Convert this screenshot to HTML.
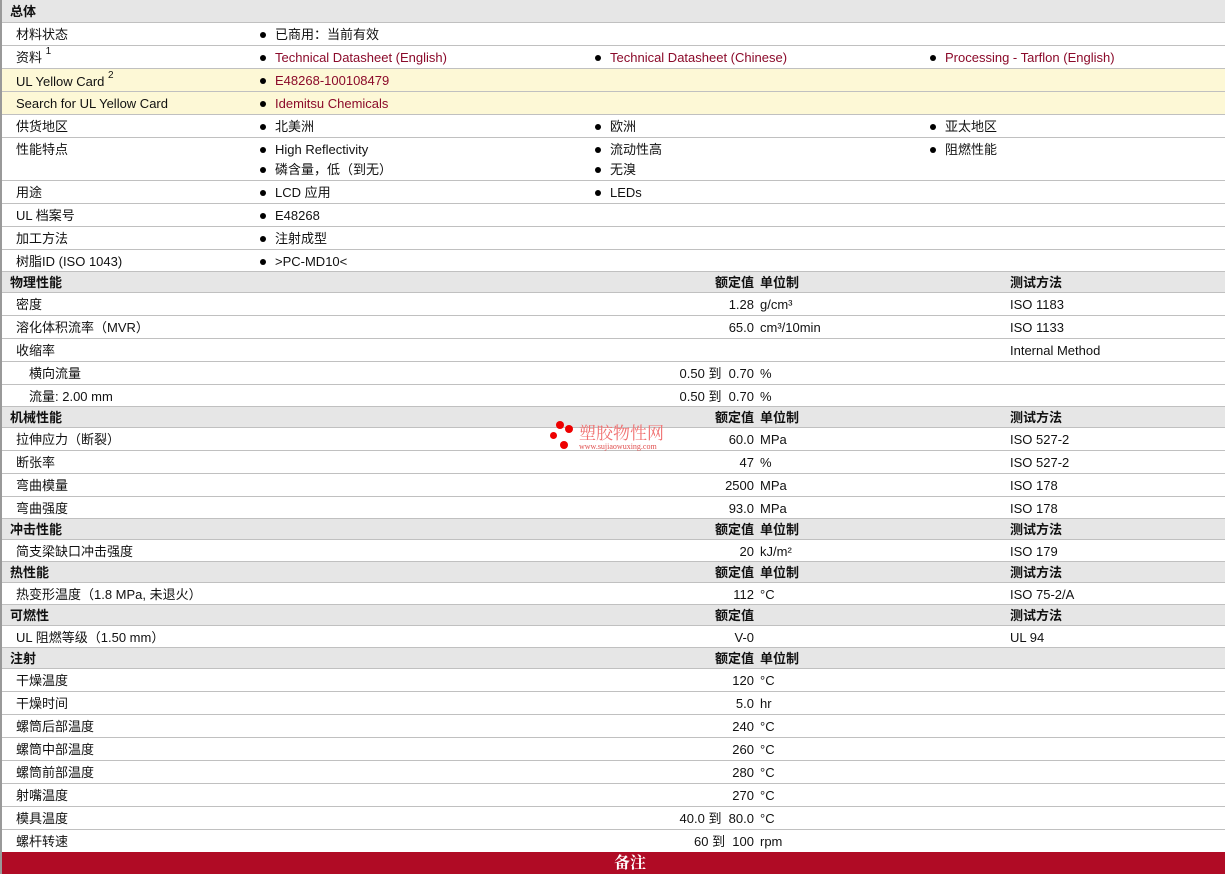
<!DOCTYPE html><html><head><meta charset="utf-8"><style>
body{margin:0;width:1225px;height:874px;overflow:hidden;background:#fff;font-family:"Liberation Sans","Noto Sans CJK SC",sans-serif;font-size:13px;color:#111;position:relative}
.r{position:absolute;left:0;width:1225px;border-bottom:1px solid #c0c0c0;box-sizing:border-box}
.h{background:#e6e6e6;font-weight:bold}
.y{background:#fdf8d6}
.r span{position:absolute;white-space:nowrap;line-height:17px;height:17px}
.b::before{content:"";position:absolute;left:-15px;top:6px;width:6px;height:6px;border-radius:50%;background:#000}
.l{color:#8b0a2a}
.v{right:471px;text-align:right}
sup{font-size:10px;line-height:10px;position:relative;top:-2px;vertical-align:top}
</style></head><body>
<div style="position:absolute;left:0;top:0;width:2px;height:874px;background:#999;z-index:5"></div>

<div class="r h" style="top:0;height:23px"><span style="left:10px;top:3px">总体</span></div>
<div class="r" style="top:23px;height:23px"><span style="left:16px;top:3px">材料状态</span><span class="b" style="left:275px;top:3px">已商用：当前有效</span></div>
<div class="r" style="top:46px;height:23px"><span style="left:16px;top:3px">资料 <sup>1</sup></span><span class="b l" style="left:275px;top:3px">Technical Datasheet (English)</span><span class="b l" style="left:610px;top:3px">Technical Datasheet (Chinese)</span><span class="b l" style="left:945px;top:3px">Processing - Tarflon (English)</span></div>
<div class="r y" style="top:69px;height:23px"><span style="left:16px;top:4px">UL Yellow Card <sup>2</sup></span><span class="b l" style="left:275px;top:3px">E48268-100108479</span></div>
<div class="r y" style="top:92px;height:23px"><span style="left:16px;top:3px">Search for UL Yellow Card</span><span class="b l" style="left:275px;top:3px">Idemitsu Chemicals</span></div>
<div class="r" style="top:115px;height:23px"><span style="left:16px;top:3px">供货地区</span><span class="b" style="left:275px;top:3px">北美洲</span><span class="b" style="left:610px;top:3px">欧洲</span><span class="b" style="left:945px;top:3px">亚太地区</span></div>
<div class="r" style="top:138px;height:43px"><span style="left:16px;top:3px">性能特点</span><span class="b" style="left:275px;top:3px">High Reflectivity</span><span class="b" style="left:610px;top:3px">流动性高</span><span class="b" style="left:945px;top:3px">阻燃性能</span><span class="b" style="left:275px;top:23px">磷含量，低（到无）</span><span class="b" style="left:610px;top:23px">无溴</span></div>
<div class="r" style="top:181px;height:23px"><span style="left:16px;top:3px">用途</span><span class="b" style="left:275px;top:3px">LCD 应用</span><span class="b" style="left:610px;top:3px">LEDs</span></div>
<div class="r" style="top:204px;height:23px"><span style="left:16px;top:3px">UL 档案号</span><span class="b" style="left:275px;top:3px">E48268</span></div>
<div class="r" style="top:227px;height:23px"><span style="left:16px;top:3px">加工方法</span><span class="b" style="left:275px;top:3px">注射成型</span></div>
<div class="r" style="top:250px;height:22px"><span style="left:16px;top:3px">树脂ID (ISO 1043)</span><span class="b" style="left:275px;top:3px">&gt;PC-MD10&lt;</span></div>

<div class="r h" style="top:272px;height:21px"><span style="left:10px;top:2px">物理性能</span><span class="v" style="top:2px">额定值</span><span style="left:760px;top:2px">单位制</span><span style="left:1010px;top:2px">测试方法</span></div>
<div class="r" style="top:293px;height:23px"><span style="left:16px;top:3px">密度</span><span class="v" style="top:3px">1.28</span><span style="left:760px;top:3px">g/cm³</span><span style="left:1010px;top:3px">ISO 1183</span></div>
<div class="r" style="top:316px;height:23px"><span style="left:16px;top:3px">溶化体积流率（MVR）</span><span class="v" style="top:3px">65.0</span><span style="left:760px;top:3px">cm³/10min</span><span style="left:1010px;top:3px">ISO 1133</span></div>
<div class="r" style="top:339px;height:23px"><span style="left:16px;top:3px">收缩率</span><span style="left:1010px;top:3px">Internal Method</span></div>
<div class="r" style="top:362px;height:23px"><span style="left:29px;top:3px">横向流量</span><span class="v" style="top:3px">0.50 到&nbsp; 0.70</span><span style="left:760px;top:3px">%</span></div>
<div class="r" style="top:385px;height:22px"><span style="left:29px;top:3px">流量: 2.00 mm</span><span class="v" style="top:3px">0.50 到&nbsp; 0.70</span><span style="left:760px;top:3px">%</span></div>

<div class="r h" style="top:407px;height:21px"><span style="left:10px;top:2px">机械性能</span><span class="v" style="top:2px">额定值</span><span style="left:760px;top:2px">单位制</span><span style="left:1010px;top:2px">测试方法</span></div>
<div class="r" style="top:428px;height:23px"><span style="left:16px;top:3px">拉伸应力（断裂）</span><span class="v" style="top:3px">60.0</span><span style="left:760px;top:3px">MPa</span><span style="left:1010px;top:3px">ISO 527-2</span></div>
<div class="r" style="top:451px;height:23px"><span style="left:16px;top:3px">断张率</span><span class="v" style="top:3px">47</span><span style="left:760px;top:3px">%</span><span style="left:1010px;top:3px">ISO 527-2</span></div>
<div class="r" style="top:474px;height:23px"><span style="left:16px;top:3px">弯曲模量</span><span class="v" style="top:3px">2500</span><span style="left:760px;top:3px">MPa</span><span style="left:1010px;top:3px">ISO 178</span></div>
<div class="r" style="top:497px;height:22px"><span style="left:16px;top:3px">弯曲强度</span><span class="v" style="top:3px">93.0</span><span style="left:760px;top:3px">MPa</span><span style="left:1010px;top:3px">ISO 178</span></div>

<div class="r h" style="top:519px;height:21px"><span style="left:10px;top:2px">冲击性能</span><span class="v" style="top:2px">额定值</span><span style="left:760px;top:2px">单位制</span><span style="left:1010px;top:2px">测试方法</span></div>
<div class="r" style="top:540px;height:22px"><span style="left:16px;top:3px">简支梁缺口冲击强度</span><span class="v" style="top:3px">20</span><span style="left:760px;top:3px">kJ/m²</span><span style="left:1010px;top:3px">ISO 179</span></div>
<div class="r h" style="top:562px;height:21px"><span style="left:10px;top:2px">热性能</span><span class="v" style="top:2px">额定值</span><span style="left:760px;top:2px">单位制</span><span style="left:1010px;top:2px">测试方法</span></div>
<div class="r" style="top:583px;height:22px"><span style="left:16px;top:3px">热变形温度（1.8 MPa, 未退火）</span><span class="v" style="top:3px">112</span><span style="left:760px;top:3px">°C</span><span style="left:1010px;top:3px">ISO 75-2/A</span></div>
<div class="r h" style="top:605px;height:21px"><span style="left:10px;top:2px">可燃性</span><span class="v" style="top:2px">额定值</span><span style="left:1010px;top:2px">测试方法</span></div>
<div class="r" style="top:626px;height:22px"><span style="left:16px;top:3px">UL 阻燃等级（1.50 mm）</span><span class="v" style="top:3px">V-0</span><span style="left:1010px;top:3px">UL 94</span></div>
<div class="r h" style="top:648px;height:21px"><span style="left:10px;top:2px">注射</span><span class="v" style="top:2px">额定值</span><span style="left:760px;top:2px">单位制</span></div>
<div class="r" style="top:669px;height:23px"><span style="left:16px;top:3px">干燥温度</span><span class="v" style="top:3px">120</span><span style="left:760px;top:3px">°C</span></div>
<div class="r" style="top:692px;height:23px"><span style="left:16px;top:3px">干燥时间</span><span class="v" style="top:3px">5.0</span><span style="left:760px;top:3px">hr</span></div>
<div class="r" style="top:715px;height:23px"><span style="left:16px;top:3px">螺筒后部温度</span><span class="v" style="top:3px">240</span><span style="left:760px;top:3px">°C</span></div>
<div class="r" style="top:738px;height:23px"><span style="left:16px;top:3px">螺筒中部温度</span><span class="v" style="top:3px">260</span><span style="left:760px;top:3px">°C</span></div>
<div class="r" style="top:761px;height:23px"><span style="left:16px;top:3px">螺筒前部温度</span><span class="v" style="top:3px">280</span><span style="left:760px;top:3px">°C</span></div>
<div class="r" style="top:784px;height:23px"><span style="left:16px;top:3px">射嘴温度</span><span class="v" style="top:3px">270</span><span style="left:760px;top:3px">°C</span></div>
<div class="r" style="top:807px;height:23px"><span style="left:16px;top:3px">模具温度</span><span class="v" style="top:3px">40.0 到&nbsp; 80.0</span><span style="left:760px;top:3px">°C</span></div>
<div class="r" style="top:830px;height:22px;border:none"><span style="left:16px;top:3px">螺杆转速</span><span class="v" style="top:3px">60 到&nbsp; 100</span><span style="left:760px;top:3px">rpm</span></div>
<div style="position:absolute;left:0;top:852px;width:1225px;height:22px;background:#b00b25;color:#fff;font-weight:bold;font-size:16px;line-height:20px"><span style="position:absolute;left:614px;font-family:'Noto Serif CJK SC',serif">备注</span></div>

<div style="position:absolute;left:550px;top:419px;width:130px;height:36px">
<div style="position:absolute;left:6px;top:2px;width:8px;height:8px;border-radius:50%;background:#e00"></div>
<div style="position:absolute;left:15px;top:6px;width:8px;height:8px;border-radius:50%;background:#e00"></div>
<div style="position:absolute;left:0;top:13px;width:7px;height:7px;border-radius:50%;background:#e00"></div>
<div style="position:absolute;left:10px;top:22px;width:8px;height:8px;border-radius:50%;background:#e00"></div>
<div style="position:absolute;left:29px;top:3px;color:#f07070;font-size:17px;line-height:20px;font-family:'Noto Serif CJK SC',serif">塑胶物性网</div>
<div style="position:absolute;left:29px;top:23px;color:#e05050;font-size:8px;line-height:9px;font-family:'Liberation Serif',serif">www.sujiaowuxing.com</div>
</div>
</body></html>
